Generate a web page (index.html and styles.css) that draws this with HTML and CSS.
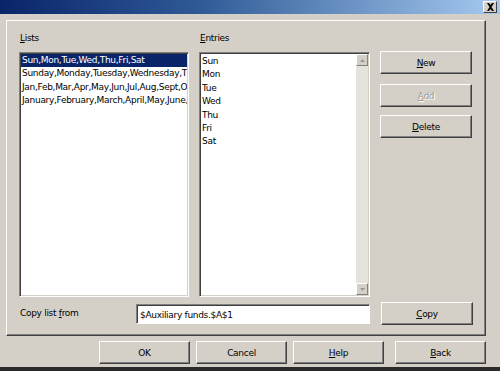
FILE: index.html
```html
<!DOCTYPE html>
<html lang="en">
<head>
    <meta charset="UTF-8">
    <title>Sort Lists</title>
    <link rel="stylesheet" href="styles.css">
</head>
<body>
    <div class="window">
        <div class="titlebar">
            <span class="close-btn">
                <svg width="9" height="8" viewBox="0 0 9 8"><path d="M1 0h2l1.5 2L6 0h2L5.5 4 8 8H6L4.5 6 3 8H1l2.5-4z" fill="#000"/></svg>
            </span>
        </div>

        <div class="group">
            <div class="group-grid">
                <div class="col">
                    <div class="field-label"><u>L</u>ists</div>
                    <div class="listbox">
                        <div class="list-item selected">Sun,Mon,Tue,Wed,Thu,Fri,Sat</div>
                        <div class="list-item">Sunday,Monday,Tuesday,Wednesday,Thursday,Friday,Saturday</div>
                        <div class="list-item">Jan,Feb,Mar,Apr,May,Jun,Jul,Aug,Sept,Oct,Nov,Dec</div>
                        <div class="list-item">January,February,March,April,May,June,July,August</div>
                    </div>
                </div>
                <div class="col">
                    <div class="field-label"><u>E</u>ntries</div>
                    <div class="listbox entries">
                        <div class="entries-text">
                            <div class="list-item">Sun</div>
                            <div class="list-item">Mon</div>
                            <div class="list-item">Tue</div>
                            <div class="list-item">Wed</div>
                            <div class="list-item">Thu</div>
                            <div class="list-item">Fri</div>
                            <div class="list-item">Sat</div>
                        </div>
                        <div class="scrollbar">
                            <span class="arrow-btn"><svg width="5" height="3" viewBox="0 0 5 3"><path d="M2.5 0L5 3H0z" fill="#9a9890"/></svg></span>
                            <span class="track"></span>
                            <span class="arrow-btn"><svg width="5" height="3" viewBox="0 0 5 3"><path d="M0 0h5L2.5 3z" fill="#9a9890"/></svg></span>
                        </div>
                    </div>
                </div>
                <div class="side-buttons">
                    <button class="btn"><u>N</u>ew</button>
                    <button class="btn disabled"><u>A</u>dd</button>
                    <button class="btn"><u>D</u>elete</button>
                </div>
            </div>

            <div class="copy-row">
                <span class="copy-label">Copy list <u>f</u>rom</span>
                <div class="text-input">$Auxiliary funds.$A$1</div>
                <button class="btn copy-btn"><u>C</u>opy</button>
            </div>
        </div>

        <div class="footer">
            <button class="btn">OK</button>
            <button class="btn">Cancel</button>
            <button class="btn"><u>H</u>elp</button>
            <button class="btn back-btn"><u>B</u>ack</button>
        </div>
    </div>
</body>
</html>
```

FILE: styles.css
```css
/* --- Base --- */
body {
    margin: 0;
    padding: 0;
    background-color: #d4d0c8;
    font-family: 'DejaVu Sans', 'Liberation Sans', sans-serif;
    font-size: 9px;
    letter-spacing: -0.3px;
    color: #000;
}

u {
    text-decoration: underline;
    text-underline-offset: 1px;
}

.window {
    width: 500px;
    height: 371px;
    overflow: hidden;
    display: flex;
    flex-direction: column;
    border-bottom: 4px solid #2a2a2a;
    box-sizing: border-box;
}

/* --- Title bar --- */
.titlebar {
    height: 14px;
    background: linear-gradient(to right, #0a246a 0%, #2f5a96 40%, #a6caf0 100%);
    display: flex;
    justify-content: flex-end;
    align-items: center;
    padding-right: 3px;
    flex-shrink: 0;
}

.close-btn {
    width: 12px;
    height: 10px;
    background-color: #d4d0c8;
    border: 1px solid;
    border-color: #fff #404040 #404040 #fff;
    display: flex;
    justify-content: center;
    align-items: center;
}

/* --- Group box --- */
.group {
    margin: 6px 14px 0 6px;
    height: 316px;
    box-sizing: border-box;
    border: 1px solid;
    border-color: #fff #404040 #404040 #fff;
    box-shadow: inset -1px -1px 0 #808080;
    padding: 11px 0 0 12px;
    display: flex;
    flex-direction: column;
}

.group-grid {
    display: grid;
    grid-template-columns: 170px 171px 92px;
    column-gap: 10px;
}

.col {
    display: flex;
    flex-direction: column;
}

.field-label {
    height: 13px;
    line-height: 13px;
    padding-left: 1px;
    margin-bottom: 7px;
}

/* --- List boxes --- */
.listbox {
    height: 245px;
    box-sizing: border-box;
    background-color: #fff;
    border: 1px solid;
    border-color: #808080 #fff #fff #808080;
    box-shadow: inset 1px 1px 0 #404040, inset -1px -1px 0 #d4d0c8;
    padding: 1px;
    overflow: hidden;
}

.list-item {
    height: 13.4px;
    line-height: 13.4px;
    white-space: nowrap;
    overflow: hidden;
    padding-left: 1px;
}

.list-item.selected {
    background-color: #0a246a;
    color: #fff;
}

.entries {
    display: flex;
    padding-right: 1px;
}

.entries-text {
    flex: 1;
    padding-top: 1px;
}

.scrollbar {
    width: 12px;
    display: flex;
    flex-direction: column;
}

.arrow-btn {
    height: 12px;
    box-sizing: border-box;
    background-color: #d4d0c8;
    border: 1px solid;
    border-color: #fff #808080 #808080 #fff;
    display: flex;
    justify-content: center;
    align-items: center;
}

.track {
    flex: 1;
    background-color: #e6e3dc;
}

/* --- Buttons --- */
.btn {
    font-family: inherit;
    font-size: 9px;
    letter-spacing: -0.3px;
    color: #000;
    height: 23px;
    background-color: #d4d0c8;
    border: 1px solid;
    border-color: #fff #404040 #404040 #fff;
    box-shadow: inset -1px -1px 0 #808080;
    padding: 0;
    margin: 0;
}

.btn.disabled {
    color: #a09c94;
    text-shadow: 1px 1px 0 #fff;
}

.side-buttons {
    display: flex;
    flex-direction: column;
    padding-top: 19px;
}

.side-buttons .btn + .btn {
    margin-top: 8px;
}

.side-buttons .btn:nth-child(2) {
    margin-top: 10px;
}

/* --- Copy row --- */
.copy-row {
    display: flex;
    align-items: center;
    margin-top: 5px;
}

.copy-label {
    width: 116px;
    padding-left: 1px;
    margin-top: -2px;
}

.text-input {
    width: 234px;
    height: 20px;
    line-height: 20px;
    box-sizing: border-box;
    background-color: #fff;
    border: 1px solid;
    border-color: #808080 #fff #fff #808080;
    box-shadow: inset 1px 1px 0 #404040;
    padding-left: 3px;
    white-space: nowrap;
}

.copy-btn {
    width: 92px;
    margin-left: 11px;
}

/* --- Footer --- */
.footer {
    display: flex;
    justify-content: flex-end;
    gap: 6px;
    padding: 5px 14px 0 0;
}

.footer .btn {
    width: 91px;
}

.footer .back-btn {
    margin-left: 5px;
}
```
